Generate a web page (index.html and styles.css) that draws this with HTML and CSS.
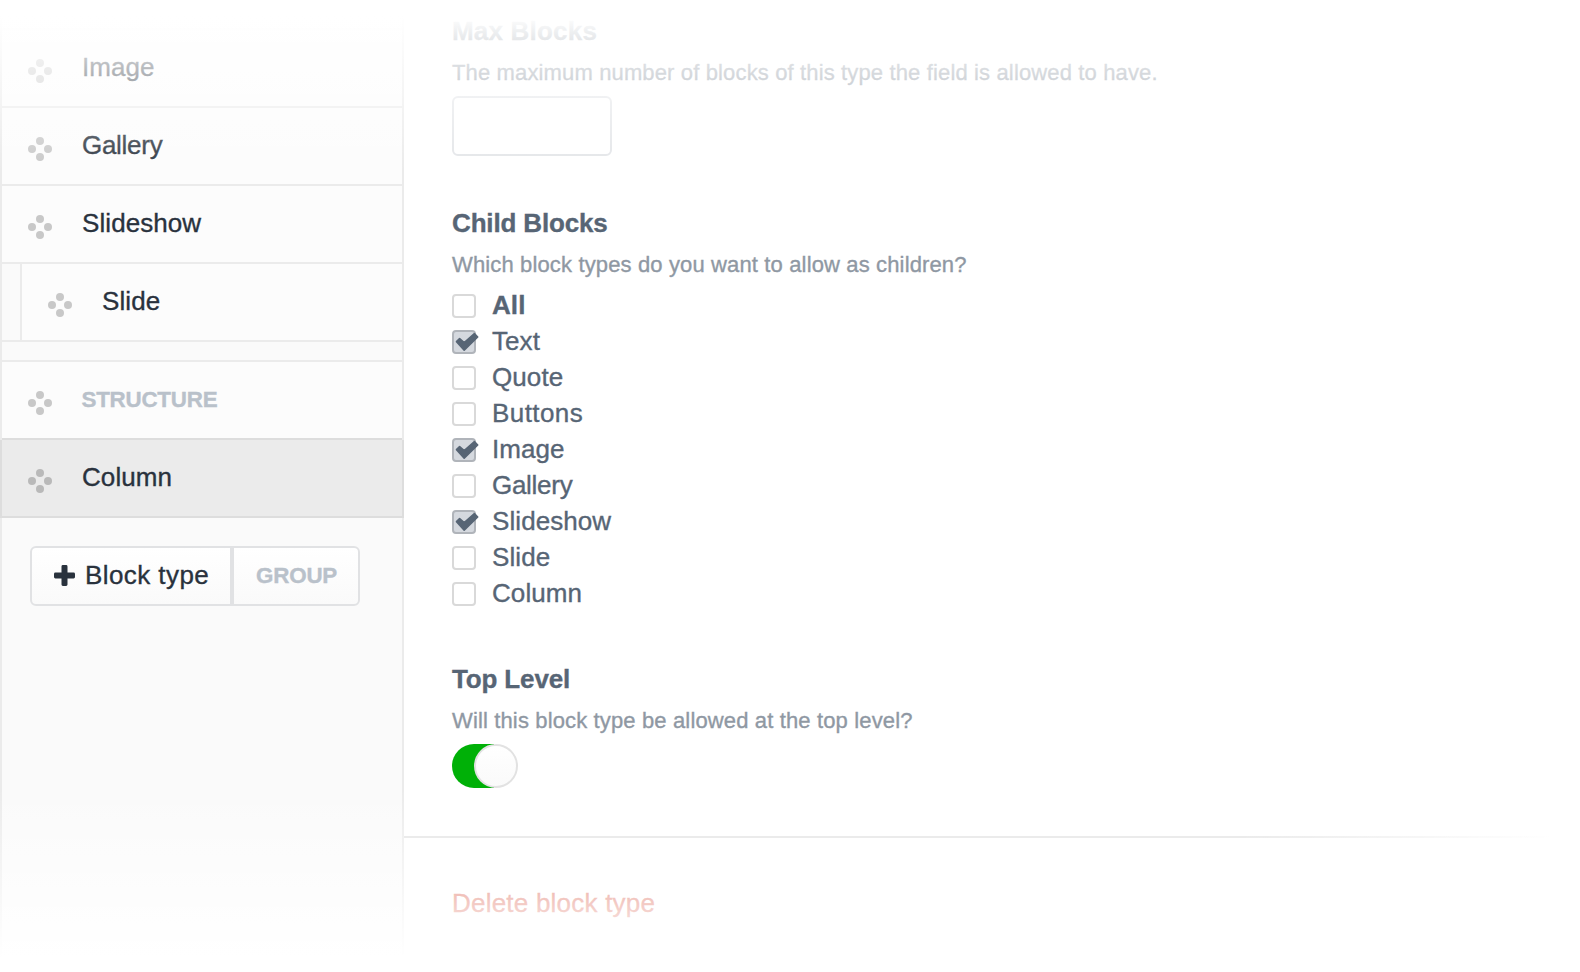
FILE: index.html
```html
<!DOCTYPE html>
<html lang="en">
<head>
<meta charset="utf-8">
<title>Block types</title>
<link rel="stylesheet" href="styles.css">
</head>
<body>
<svg class="sprites" aria-hidden="true">
  <symbol id="move" viewBox="0 0 24 24"><circle cx="12" cy="4" r="4"/><circle cx="4" cy="12" r="4"/><circle cx="20" cy="12" r="4"/><circle cx="12" cy="20" r="4"/></symbol>
  <symbol id="check" viewBox="0 0 24 20"><path d="M1.5 9.6 L4.6 6.5 L9.2 10.6 L19.4 1.6 L22.7 5 L9.2 18.1 Z" fill="currentColor" stroke="currentColor" stroke-width="1.6" stroke-linejoin="round"/></symbol>
</svg>
<div class="editor">
  <aside class="sidebar">
    <div class="row"><svg class="move"><use href="#move"/></svg><span class="name">Image</span></div>
    <div class="row"><svg class="move"><use href="#move"/></svg><span class="name tight">Gallery</span></div>
    <div class="row"><svg class="move"><use href="#move"/></svg><span class="name">Slideshow</span></div>
    <div class="row child"><svg class="move"><use href="#move"/></svg><span class="name">Slide</span></div>
    <div class="row group"><svg class="move"><use href="#move"/></svg><span class="name">STRUCTURE</span></div>
    <div class="row selected"><svg class="move"><use href="#move"/></svg><span class="name">Column</span></div>
    <div class="buttons">
      <button class="btn add"><svg class="plus" viewBox="0 0 21 21"><path d="M8.9 0h3.2q1.4 0 1.4 1.4v6.1h6.1q1.4 0 1.4 1.4v3.2q0 1.4-1.4 1.4h-6.1v6.1q0 1.4-1.4 1.4h-3.2q-1.4 0-1.4-1.4v-6.1h-6.1q-1.4 0-1.4-1.4v-3.2q0-1.4 1.4-1.4h6.1v-6.1q0-1.4 1.4-1.4z"/></svg><span class="loose">Block type</span></button>
      <button class="btn grp"><span>GROUP</span></button>
    </div>
  </aside>
  <main class="settings">
    <section class="field max">
      <h2 class="wide">Max Blocks</h2>
      <p class="hint">The maximum number of blocks of this type the field is allowed to have.</p>
      <input class="text" type="text">
    </section>
    <section class="field children">
      <h2>Child Blocks</h2>
      <p class="hint">Which block types do you want to allow as children?</p>
      <ul class="checks">
        <li><i class="box"></i><b>All</b></li>
        <li><i class="box on"><svg><use href="#check"/></svg></i><span>Text</span></li>
        <li><i class="box"></i><span>Quote</span></li>
        <li><i class="box"></i><span class="loose">Buttons</span></li>
        <li><i class="box on"><svg><use href="#check"/></svg></i><span>Image</span></li>
        <li><i class="box"></i><span class="tight">Gallery</span></li>
        <li><i class="box on"><svg><use href="#check"/></svg></i><span>Slideshow</span></li>
        <li><i class="box"></i><span>Slide</span></li>
        <li><i class="box"></i><span>Column</span></li>
      </ul>
    </section>
    <section class="field top">
      <h2>Top Level</h2>
      <p class="hint">Will this block type be allowed at the top level?</p>
      <div class="switch"><i class="knob"></i></div>
    </section>
    <footer class="foot"><a class="delete">Delete block type</a></footer>
  </main>
  <div class="fade"></div>
</div>
</body>
</html>
```

FILE: styles.css
```css
* { box-sizing: border-box; }
body { margin: 0; background: #fff; }
.sprites { display: none; }
.editor {
  position: relative;
  display: flex;
  width: 1580px;
  height: 972px;
  overflow: hidden;
  font: 26px/36px "Liberation Sans", Arial, sans-serif;
  letter-spacing: 0.08px;
  -webkit-text-stroke: 0.35px;
  color: #29323d;
}
.tight { letter-spacing: -0.28px; }
.loose { letter-spacing: 0.42px; }
.fade {
  position: absolute;
  inset: 0;
  pointer-events: none;
  background:
    linear-gradient(to bottom, #fff 16px, rgba(255,255,255,0) 172px),
    linear-gradient(to bottom, rgba(255,255,255,0) 788px, #fff 958px),
    linear-gradient(to right, rgba(255,255,255,0) 1240px, #fff 1550px);
}

/* Sidebar */
.sidebar {
  width: 404px;
  padding-top: 28px;
  border: solid #ebebeb;
  border-width: 0 2px;
  background: #fafafa;
}
.row {
  display: flex;
  align-items: flex-start;
  height: 78px;
  padding: 0 0 0 26px;
  border-bottom: 2px solid #ebebeb;
  background: #fcfcfc;
}
.row:first-child { height: 80px; border-top: 2px solid #f2f2f2; }
.move { flex: none; width: 24px; height: 24px; margin-top: 29px; fill: #c8c8c8; }
.name { margin: 19px 0 0 30px; }
.child {
  padding-left: 46px;
  background: linear-gradient(to right, #fafafa 18px, #ebebeb 18px 20px, #fcfcfc 20px);
}
.group { height: 80px; margin-top: 18px; border-top: 2px solid #ebebeb; border-bottom-color: #ddd; }
.group .name { margin: 20px 0 0 29.5px; font-size: 22.4px; font-weight: 700; color: #b9c1ca; letter-spacing: -0.25px; }
.selected {
  margin: 0 -2px;
  border: solid #ddd;
  border-width: 0 2px 2px;
  background: #ebebeb;
}
.selected .move { fill: #b9b9b9; }
.buttons { display: flex; margin: 28px 0 0 28px; }
.btn {
  display: flex;
  align-items: center;
  height: 60px;
  padding: 0;
  border: 2px solid #e1e2e4;
  background: linear-gradient(#fff, #fafafa);
  font: inherit;
  letter-spacing: inherit;
  color: inherit;
}
.add { width: 202px; padding-left: 22px; border-radius: 6px 0 0 6px; }
.add span { margin-left: 10px; margin-top: -3px; }
.plus { width: 21px; height: 21px; margin-top: -1px; fill: #29323d; }
.grp {
  width: 128px;
  padding: 0 0 0 22px;
  border-radius: 0 6px 6px 0;
  font-size: 22.4px;
  font-weight: 700;
  letter-spacing: -0.2px;
  color: #b9c1ca;
}

/* Settings */
.settings { flex: 1; color: #576575; }
.field { padding-left: 48px; }
h2 { margin: 0; font-size: 26px; line-height: 36px; letter-spacing: -0.15px; }
.wide { letter-spacing: 0.2px; }
.hint { margin: 8px 0 0; font-size: 22px; line-height: 32px; letter-spacing: 0.14px; color: #8f98a3; white-space: nowrap; }
.max { padding-top: 13px; }
.text {
  display: block;
  width: 160px;
  height: 60px;
  margin-top: 7px;
  border: 2px solid #e3e5e8;
  border-radius: 6px;
  background: #fff;
}
.children { padding-top: 49px; }
.checks { margin: 6px 0 1px; padding: 0; list-style: none; }
.checks li { display: flex; height: 36px; }
.box {
  position: relative;
  flex: none;
  width: 24px;
  height: 24px;
  margin: 7px 16px 0 0;
  border: 2px solid #d9d9d9;
  border-radius: 4px;
}
.on { border-color: #b0b4ba; background: #d5d9df; }
.box svg { position: absolute; left: 1px; top: 0; width: 24px; height: 20px; color: #576575; }
.top { padding-top: 49px; }
.switch {
  width: 66px;
  height: 44px;
  margin-top: 7px;
  border-radius: 22px;
  background: linear-gradient(to right, #00b007 42px, transparent 42px);
}
.knob {
  display: block;
  width: 44px;
  height: 44px;
  margin-left: 22px;
  border: 2px solid #e2e2e2;
  border-radius: 22px;
  background: linear-gradient(#fff, #fafafa);
}
.foot { margin-top: 48px; padding: 47px 0 0 48px; border-top: 2px solid #e3e3e3; }
.delete { color: #da5a47; letter-spacing: 0.22px; }
```
